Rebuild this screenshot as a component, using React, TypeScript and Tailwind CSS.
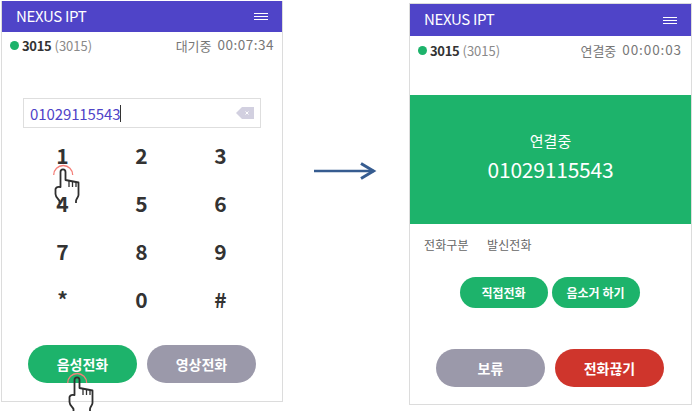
const font = "font-['Noto_Sans_CJK_KR','Noto_Sans',sans-serif]";

function Hand({ className }: { className: string }) {
  return (
    <svg className={className} width="30" height="42" viewBox="0 0 30 42" fill="none">
      <path d="M0.7 12 A 9.5 9.5 0 0 1 19.7 12" stroke="#f47f78" strokeWidth="1.3" />
      <path
        d="M6.5 40 L6.5 38 C5.5 36 2.5 34 2.5 31 L2.5 26 C3 24 5 23.5 7.5 24 L7.5 9 C7.5 5.5 12.5 5.5 12.5 9 L12.5 17 L25.5 19.5 L25.5 32 C25.5 34 23 36 23 38 L23 40"
        stroke="#2f2f2f"
        strokeWidth="1.8"
        strokeLinejoin="round"
      />
      <path d="M16 18 L16 24 M19.5 18.5 L19.5 24 M23 19 L23 24" stroke="#2f2f2f" strokeWidth="1.3" />
    </svg>
  );
}

function Header({ h }: { h: string }) {
  return (
    <div className={`flex items-center justify-between bg-[#4f44c8] pr-[14px] pl-[14px] ${h}`}>
      <span className="-mt-[3px] text-[15px] leading-none tracking-[-0.35px] text-white">NEXUS IPT</span>
      <div className="flex flex-col gap-[2px]">
        <div className="h-px w-[14px] bg-white" />
        <div className="h-px w-[14px] bg-white" />
        <div className="h-px w-[14px] bg-white" />
      </div>
    </div>
  );
}

function Status({ label, time, h, pr, tracking }: { label: string; time: string; h: string; pr: string; tracking: string }) {
  return (
    <div className={`flex items-center justify-between pl-[8px] text-[13px] leading-none ${h} ${pr}`}>
      <div className="flex items-center">
        <span className="mr-[3px] h-[9px] w-[9px] rounded-full bg-[#1db36b]" />
        <span className="font-bold tracking-[-0.3px] text-[#333]">3015</span>
        <span className="ml-[3px] text-[#8a8a8a]">(3015)</span>
      </div>
      <span className="flex items-center text-[#777]">
        <span>{label}</span>
        <span className={`ml-[6px] text-[13.5px] ${tracking}`}>{time}</span>
      </span>
    </div>
  );
}

function Pill({ text, color, w, h, size }: { text: string; color: string; w: string; h: string; size: string }) {
  return (
    <div className={`flex items-center justify-center rounded-full font-bold text-white ${color} ${w} ${h} ${size}`}>{text}</div>
  );
}

const keys = ["1", "2", "3", "4", "5", "6", "7", "8", "9", "*", "0", "#"];

export default function App() {
  return (
    <div className={`relative flex h-[417px] w-[698px] items-start overflow-hidden bg-white ${font}`}>
      <div className="mt-px ml-px flex h-[401px] w-[282px] flex-col border-r border-b border-l border-[#dcdcdc]">
        <Header h="h-[31px]" />
        <Status label="대기중" time="00:07:34" h="h-[26px]" pr="pr-[8px]" tracking="tracking-[0.5px]" />
        <div className="mx-[21px] mt-[40px] flex h-[30px] items-center justify-between border border-[#dedede] pr-[6px] pl-[6px]">
          <div className="flex items-center text-[15px] leading-none tracking-[-0.1px] text-[#4f44c8]">
            01029115543
            <span className="h-[17px] w-px bg-[#333]" />
          </div>
          <svg width="18" height="12" viewBox="0 0 18 12">
            <path d="M0 6 L6 0 H18 V12 H6 Z" fill="#d2d0e0" />
            <path d="M9.5 4.5 L12.5 7.5 M12.5 4.5 L9.5 7.5" stroke="#fff" strokeWidth="1" />
          </svg>
        </div>
        <div className="mt-[3px] ml-[21px] grid w-[237px] grid-cols-3 text-[#333]">
          {keys.map((k) => (
            <div key={k} className="flex h-[48px] items-center justify-center text-[21px] leading-none font-semibold">
              {k}
            </div>
          ))}
        </div>
        <div className="mt-[22px] ml-[26px] flex gap-[10px]">
          <Pill text="음성전화" color="bg-[#1db36b]" w="w-[109px]" h="h-[38px]" size="text-[14px]" />
          <Pill text="영상전화" color="bg-[#9b99aa]" w="w-[109px]" h="h-[38px]" size="text-[14px]" />
        </div>
      </div>

      <svg className="mt-[162px] ml-[31px]" width="64" height="18" viewBox="0 0 64 18" fill="none">
        <path d="M0 9 H60" stroke="#365c90" strokeWidth="2.6" />
        <path d="M47 1.5 L59.5 9 L47 16.5" stroke="#365c90" strokeWidth="3" />
      </svg>

      <div className="mt-[3px] ml-[31px] flex h-[402px] w-[283px] flex-col border border-[#dcdcdc]">
        <Header h="h-[32px]" />
        <Status label="연결중" time="00:00:03" h="h-[28px]" pr="pr-[9px]" tracking="tracking-[0.9px]" />
        <div className="mt-[31px] flex h-[129px] flex-col items-center justify-center bg-[#1db36b] pb-[6px] text-white">
          <span className="text-[15px] leading-none">연결중</span>
          <span className="mt-[11px] text-[21px] leading-none tracking-[-0.2px]">01029115543</span>
        </div>
        <div className="mt-[14px] ml-[14px] flex h-[14px] items-center text-[12px] leading-none tracking-[0.1px] text-[#666]">
          <span className="w-[63px]">전화구분</span>
          <span>발신전화</span>
        </div>
        <div className="mt-[25px] flex justify-center gap-[4px] pr-[2px]">
          <Pill text="직접전화" color="bg-[#1db36b]" w="w-[88px]" h="h-[31px]" size="text-[12px]" />
          <Pill text="음소거 하기" color="bg-[#1db36b]" w="w-[88px]" h="h-[31px]" size="text-[12px]" />
        </div>
        <div className="mt-[41px] ml-[26px] flex gap-[10px]">
          <Pill text="보류" color="bg-[#9b99aa]" w="w-[109px]" h="h-[38px]" size="text-[14px]" />
          <Pill text="전화끊기" color="bg-[#cf352c]" w="w-[109px]" h="h-[38px]" size="text-[14px]" />
        </div>
      </div>

      <Hand className="absolute top-[163px] left-[53px]" />
      <Hand className="absolute top-[371px] left-[67px]" />
    </div>
  );
}
